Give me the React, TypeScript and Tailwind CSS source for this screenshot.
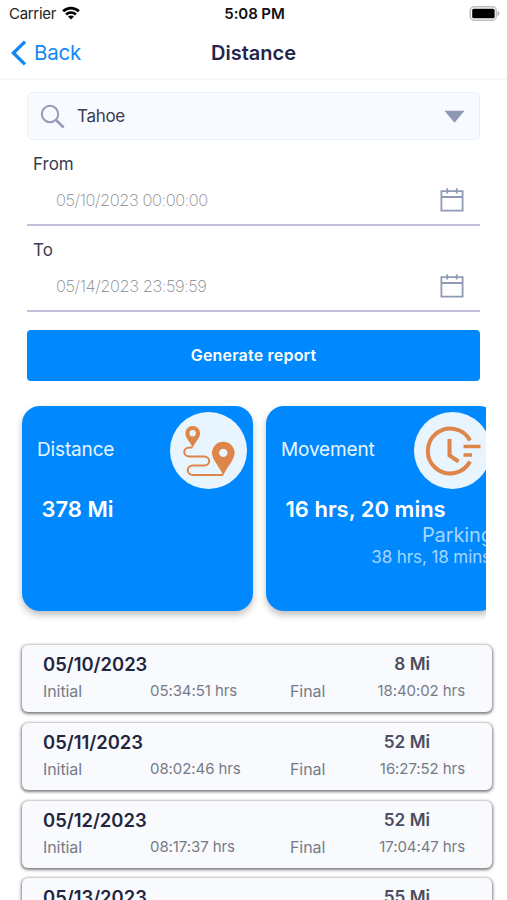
import React from "react";

const trips = [
  { date: "05/10/2023", miles: "8 Mi", initial: "05:34:51 hrs", final: "18:40:02 hrs" },
  { date: "05/11/2023", miles: "52 Mi", initial: "08:02:46 hrs", final: "16:27:52 hrs" },
  { date: "05/12/2023", miles: "52 Mi", initial: "08:17:37 hrs", final: "17:04:47 hrs" },
  { date: "05/13/2023", miles: "55 Mi", initial: "07:48:12 hrs", final: "19:21:05 hrs" },
];

function StatusBar() {
  return (
    <div className="grid h-7 shrink-0 grid-cols-3 items-center pl-[9px] pr-[7px] text-black">
      <div className="flex items-center gap-[6px]">
        <span className="text-[15px] leading-5 tracking-[-0.3px] text-[#222]">Carrier</span>
        <svg className="-mt-[2px]" width="18" height="14" viewBox="0 0 19 14" fill="none" stroke="#000" strokeWidth="2.8">
          <path d="M1.2 5.2C5.8 .7 13.2 .7 17.8 5.2" />
          <path d="M4.3 8.6C7.2 5.8 11.8 5.8 14.7 8.6" />
          <path d="M9.5 13.8L6.3 10.8C8.1 9.1 10.9 9.1 12.7 10.8Z" fill="#000" stroke="none" />
        </svg>
      </div>
      <span className="text-center text-[15px] font-semibold leading-5 tracking-[-0.1px] text-[#111]">5:08 PM</span>
      <svg className="-mt-[2px] justify-self-end" width="31" height="15" viewBox="0 0 31 15">
        <rect x="1.3" y=".8" width="26" height="13.4" rx="4" fill="#fff" stroke="#bdbdbd" strokeWidth="1.5" />
        <rect x="3.2" y="2.7" width="22.4" height="9.6" rx="1.6" fill="#000" />
        <path d="M28.6 5C31 6 31 9 28.6 10Z" fill="#aaa" />
      </svg>
    </div>
  );
}

function NavBar() {
  return (
    <header className="grid h-[52px] shrink-0 grid-cols-3 items-center border-b-2 border-[#f6f6f7] px-[11px]">
      <div className="flex items-center gap-[7px] text-[#1288f5]">
        <svg width="16" height="26" viewBox="0 0 16 26" fill="none" stroke="currentColor" strokeWidth="3.4">
          <path d="M14 1.6L2.4 13L14 24.4" />
        </svg>
        <span className="text-[20.5px] leading-6 tracking-[-0.2px]">Back</span>
      </div>
      <h1 className="-mt-px text-center text-[20px] font-semibold leading-6 text-[#23264a]">Distance</h1>
    </header>
  );
}

function CalendarIcon() {
  return (
    <svg width="24" height="24" viewBox="0 0 24 24" fill="none" stroke="#8f9ab5" strokeWidth="1.8">
      <path d="M1.4 3.2H22.6V22.6H1.4ZM1.4 9H22.6" />
      <path d="M7.2 .3V5.6M16.7 .3V5.6" />
    </svg>
  );
}

function DateField({ label, value }: { label: string; value: string }) {
  return (
    <div>
      <div className="pl-[6px] text-[17px] leading-6 text-[#3a3d50]">{label}</div>
      <div className="flex h-[50px] items-center justify-between border-b-2 border-[#c0bfd7] pl-[29px] pr-[16px]">
        <span className="text-[16.4px] font-extralight leading-6 tracking-[-0.4px] text-[#85878c]">{value}</span>
        <CalendarIcon />
      </div>
    </div>
  );
}

function RouteIcon() {
  return (
    <svg width="77" height="77" viewBox="0 0 77 77" fill="none">
      <path
        d="M22.5 35.5H19.5C12.5 35.5 12.5 44.5 19.5 44.5H34C41 44.5 41 53.5 34 53.5H23C16 53.5 16 63 23 63H53"
        stroke="#de8549"
        strokeWidth="2"
      />
      <path
        fillRule="evenodd"
        d="M22.7 35.8C20 29.8 15.3 26 15.3 21.3A7.4 7.4 0 0 1 30.1 21.3C30.1 26 25.4 29.8 22.7 35.8ZM22.7 18.1A3.2 3.2 0 1 0 22.7 24.5A3.2 3.2 0 1 0 22.7 18.1Z"
        fill="#de8549"
      />
      <path
        fillRule="evenodd"
        d="M53.3 63.5C49.5 54.5 42 48 42 41A11.3 11.3 0 0 1 64.6 41C64.6 48 57.1 54.5 53.3 63.5ZM53.3 36.7A4.2 4.2 0 1 0 53.3 45.1A4.2 4.2 0 1 0 53.3 36.7Z"
        fill="#de8549"
      />
    </svg>
  );
}

function ClockIcon() {
  return (
    <svg width="77" height="77" viewBox="0 0 77 77" fill="none" stroke="#de8549" strokeWidth="4">
      <path d="M56 28.5A22.4 22.4 0 1 0 56 49.5" />
      <path d="M35.5 27V43.5L44.5 49.5" />
      <path d="M49.5 34.5H66.5M49.5 43H58" strokeWidth="3.4" />
    </svg>
  );
}

function SummaryCard({ title, value, icon, children }: { title: string; value: string; icon: React.ReactNode; children?: React.ReactNode }) {
  return (
    <section className="h-[205px] w-[231px] shrink-0 rounded-[18px] bg-[#0089ff] pt-[6px] text-white shadow-[0_4px_7px_rgba(0,0,0,0.25)]">
      <div className="flex justify-between pl-[15px] pr-[6px]">
        <h2 className="mt-[26px] text-[19px] leading-6 tracking-[-0.15px] text-[#e8f5ff]">{title}</h2>
        <div className="size-[77px] rounded-full bg-[#e9f5fe]">{icon}</div>
      </div>
      <div className="mt-[6px] whitespace-nowrap pl-[19.5px] text-[22px] font-semibold leading-7">{value}</div>
      {children}
    </section>
  );
}

function TripRow({ trip }: { trip: (typeof trips)[number] }) {
  return (
    <article className="h-[67px] shrink-0 rounded-[6px] bg-[#f8fafd] pl-[21px] pr-[27px] pt-[7px] shadow-[0_1px_3px_1px_rgba(0,0,0,0.5)]">
      <div className="flex items-center justify-between pr-[35px]">
        <span className="text-[18.4px] font-semibold leading-6 text-[#23253f]">{trip.date}</span>
        <span className="text-[17.2px] font-semibold leading-6 text-[#4b4d60]">{trip.miles}</span>
      </div>
      <div className="mt-[5px] grid grid-cols-[107px_140px_1fr_auto] items-center text-[15px] leading-5 tracking-[-0.08px] text-[#777b88]">
        <span className="text-[16px]">Initial</span>
        <span>{trip.initial}</span>
        <span className="text-[16px]">Final</span>
        <span>{trip.final}</span>
      </div>
    </article>
  );
}

export default function App() {
  return (
    <div className="flex h-[900px] w-[507px] flex-col overflow-hidden bg-white font-['Inter','Liberation_Sans',sans-serif]">
      <StatusBar />
      <NavBar />
      <main className="shrink-0 px-[27px] pt-[12px]">
        <div className="flex h-[48px] items-center rounded-[5px] border-[1.5px] border-[#eaeff4] bg-[#f7fafe] pl-[12px] pr-[14px]">
          <svg width="25" height="25" viewBox="0 0 25 25" fill="none" stroke="#9799b6" strokeWidth="2">
            <circle cx="10" cy="10" r="8.2" />
            <path d="M16 16L23.7 23.5" strokeWidth="2.5" />
          </svg>
          <span className="ml-[12px] flex-1 text-[17px] leading-6 tracking-[-0.3px] text-[#3a3d50]">Tahoe</span>
          <svg width="21" height="13" viewBox="0 0 22 13" fill="#8e98b5">
            <path d="M.5 .5H21.5L11 13Z" />
          </svg>
        </div>
        <div className="mt-[12px] flex flex-col gap-[11.5px]">
          <DateField label="From" value="05/10/2023 00:00:00" />
          <DateField label="To" value="05/14/2023 23:59:59" />
        </div>
        <button className="mt-[18.5px] block h-[51px] w-full rounded-[4px] bg-[#0089ff] pb-[2px] text-[16px] font-semibold tracking-[0.2px] text-white">
          Generate report
        </button>
      </main>
      <div className="ml-[12px] mr-[21px] mt-[10px] flex h-[234px] shrink-0 gap-[13px] overflow-hidden pl-[10px] pt-[15px]">
        <SummaryCard title="Distance" value="378 Mi" icon={<RouteIcon />} />
        <SummaryCard title="Movement" value="16 hrs, 20 mins" icon={<ClockIcon />}>
          <div className="whitespace-nowrap pr-[4px] text-right text-[#a5d6ff]">
            <div className="text-[20px] leading-6 tracking-[-0.1px]">Parking</div>
            <div className="pr-[2px] text-[17px] leading-5 tracking-[-0.1px]">38 hrs, 18 mins</div>
          </div>
        </SummaryCard>
      </div>
      <div className="mt-[20px] flex flex-col gap-[10.8px] pl-[22px] pr-[15px]">
        {trips.map((trip) => (
          <TripRow key={trip.date} trip={trip} />
        ))}
      </div>
    </div>
  );
}
